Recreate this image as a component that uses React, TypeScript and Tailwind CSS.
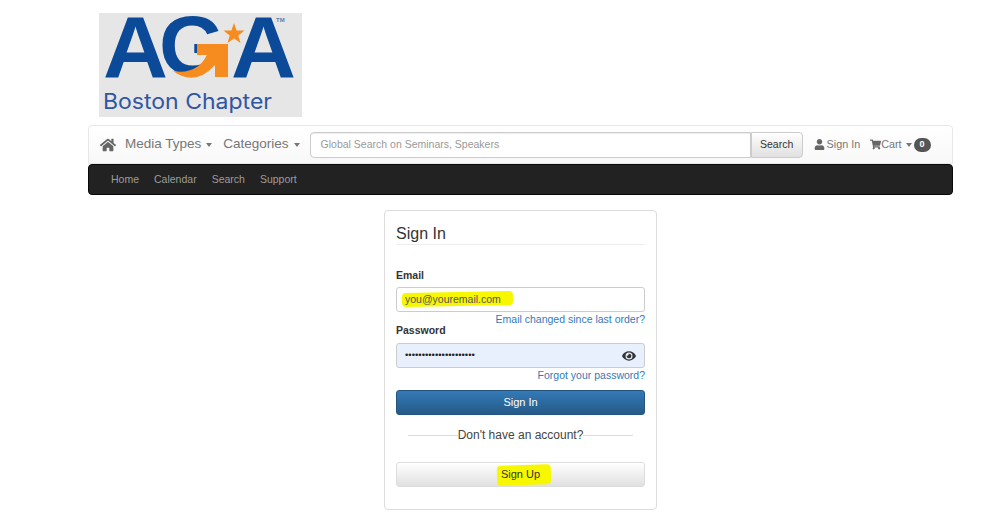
import { FaHome, FaUser, FaShoppingCart, FaEye } from "react-icons/fa";

const Caret = () => (
    <span className="inline-block w-0 h-0 border-x-[3.5px] border-x-transparent border-t-[4px] border-t-[#777]"></span>
);

const Logo = () => (
    <svg viewBox="0 0 203 104" className="w-[203px] h-[104px] block">
        <rect width="203" height="104" fill="#e6e6e6" />
        <text x="4" y="64" fontFamily="'Liberation Sans', sans-serif" fontWeight="700" fontSize="88" fill="#0b4a99" textLength="65" lengthAdjust="spacingAndGlyphs">A</text>
        <text x="60" y="61" fontFamily="'Liberation Sans', sans-serif" fontWeight="700" fontSize="84" fill="#0b4a99" textLength="66" lengthAdjust="spacingAndGlyphs">G</text>
        {/* hides the foot of the G, the orange arrow sits there */}
        <rect x="106" y="24" width="26" height="44" fill="#e6e6e6" />
        <path d="M98 31 H129 V64 H116 V52 Q96 74 74 58 Q98 62 108 42 H98 Z" fill="#f68b1f" />
        <path d="M135 10 L137.600 17.400 L145.500 17.600 L139.300 22.400 L141.500 29.900 L135 25.500 L128.500 29.900 L130.700 22.400 L124.500 17.600 L132.400 17.400 Z" fill="#f68b1f" />
        <text x="132" y="64" fontFamily="'Liberation Sans', sans-serif" fontWeight="700" fontSize="88" fill="#0b4a99" textLength="65" lengthAdjust="spacingAndGlyphs">A</text>
        <text x="177" y="9" fontFamily="'Liberation Sans', sans-serif" fontWeight="700" fontSize="6" fill="#5f7fa8">TM</text>
        <text x="4" y="96" fontFamily="Inter, sans-serif" fontSize="21" fill="#2f55a4" textLength="169" lengthAdjust="spacingAndGlyphs">Boston Chapter</text>
    </svg>
);

export default function App() {
    return (
        <div className="w-[1000px] h-[511px] overflow-hidden bg-white font-['Liberation_Sans',Arial,sans-serif] text-[#333]">
            <div className="pt-[13px] pl-[99px]">
                <Logo />
            </div>

            <div className="mt-[8px] ml-[88px] w-[865px]">
                <div className="h-[39px] flex items-center border border-[#e7e7e7] rounded-t bg-gradient-to-b from-white to-[#f8f8f8] text-[#777]">
                    <FaHome className="ml-[11px] w-[16px] h-[16px] text-[#666]" />
                    <span className="ml-[9px] text-[13.5px]">Media Types</span>
                    <span className="ml-[5px] flex"><Caret /></span>
                    <span className="ml-[11px] text-[13.5px]">Categories</span>
                    <span className="ml-[5px] flex"><Caret /></span>
                    <div className="ml-[10px] flex h-[26px] w-[493px]">
                        <div className="w-[441px] flex items-center pl-[10px] border border-[#ccc] bg-white text-[10.5px] text-[#999] rounded-l shadow-[inset_0_1px_1px_rgba(0,0,0,0.075)]">
                            Global Search on Seminars, Speakers
                        </div>
                        <div className="w-[52px] flex items-center justify-center border border-[#ccc] rounded-r bg-gradient-to-b from-white to-[#e0e0e0] text-[10.5px] text-[#333]">
                            Search
                        </div>
                    </div>
                    <FaUser className="ml-[11px] w-[11px] h-[11px] text-[#666]" />
                    <span className="ml-[2px] text-[10.8px]">Sign In</span>
                    <FaShoppingCart className="ml-[10px] w-[11px] h-[11px] text-[#666]" />
                    <span className="text-[10.8px]">Cart</span>
                    <span className="ml-[4px] flex"><Caret /></span>
                    <span className="ml-[2px] w-[17px] h-[14px] flex items-center justify-center rounded-full bg-[#555] text-white text-[9px] font-bold">0</span>
                </div>
                <div className="h-[31px] flex items-center gap-[15px] pl-[22px] bg-[#222] border border-[#080808] rounded text-[10.5px] text-[#9d9d9d]">
                    <span>Home</span>
                    <span>Calendar</span>
                    <span>Search</span>
                    <span>Support</span>
                </div>
            </div>

            <div className="mt-[15px] ml-[384px] w-[273px] h-[300px] border border-[#ddd] rounded px-[11px] bg-white">
                <h3 className="h-[34px] pt-[13px] text-[16px] leading-[20px] text-[#333] border-b border-[#eee]">Sign In</h3>

                <label className="block mt-[23px] text-[10.5px] leading-[14px] font-bold">Email</label>
                <div className="relative mt-[5px] h-[25px] flex items-center pl-[8px] border border-[#ccc] rounded-[3px] text-[10.5px] text-[#555]">
                    <span className="absolute left-[5px] top-[4px] w-[111px] h-[14px] bg-[#f7f700] -rotate-1 rounded-sm"></span>
                    <span className="relative">you@youremail.com</span>
                </div>
                <div className="mt-[1px] text-right text-[10.5px] leading-[13px] text-[#337ab7]">Email changed since last order?</div>

                <label className="block mt-[-3px] text-[10.5px] leading-[14px] font-bold">Password</label>
                <div className="mt-[6px] h-[25px] flex items-center justify-between pl-[8px] pr-[8px] border border-[#ccc] rounded-[3px] bg-[#e8f0fe]">
                    <span className="text-[9.5px] text-[#222]">{"•".repeat(21)}</span>
                    <FaEye className="w-[14px] h-[14px] text-[#333]" />
                </div>
                <div className="mt-[1px] text-right text-[10.5px] leading-[13px] text-[#337ab7]">Forgot your password?</div>

                <div className="mt-[8px] h-[25px] flex items-center justify-center rounded-[3px] border border-[#245580] bg-gradient-to-b from-[#337ab7] to-[#265a88] text-white text-[11px]">
                    Sign In
                </div>

                <div className="mt-[12px] flex items-center px-[12px] text-[12px] leading-[16px] text-[#444]">
                    <span className="flex-1 h-px bg-[#ddd]"></span>
                    <span>Don't have an account?</span>
                    <span className="flex-1 h-px bg-[#ddd]"></span>
                </div>

                <div className="relative mt-[19px] h-[25px] flex items-center justify-center rounded-[3px] border border-[#ddd] bg-gradient-to-b from-white to-[#e0e0e0] text-[11px] text-[#333]">
                    <span className="absolute left-[100px] top-[2px] w-[54px] h-[20px] bg-[#f7f700] -rotate-2 rounded-sm"></span>
                    <span className="relative">Sign Up</span>
                </div>
            </div>
        </div>
    );
}
